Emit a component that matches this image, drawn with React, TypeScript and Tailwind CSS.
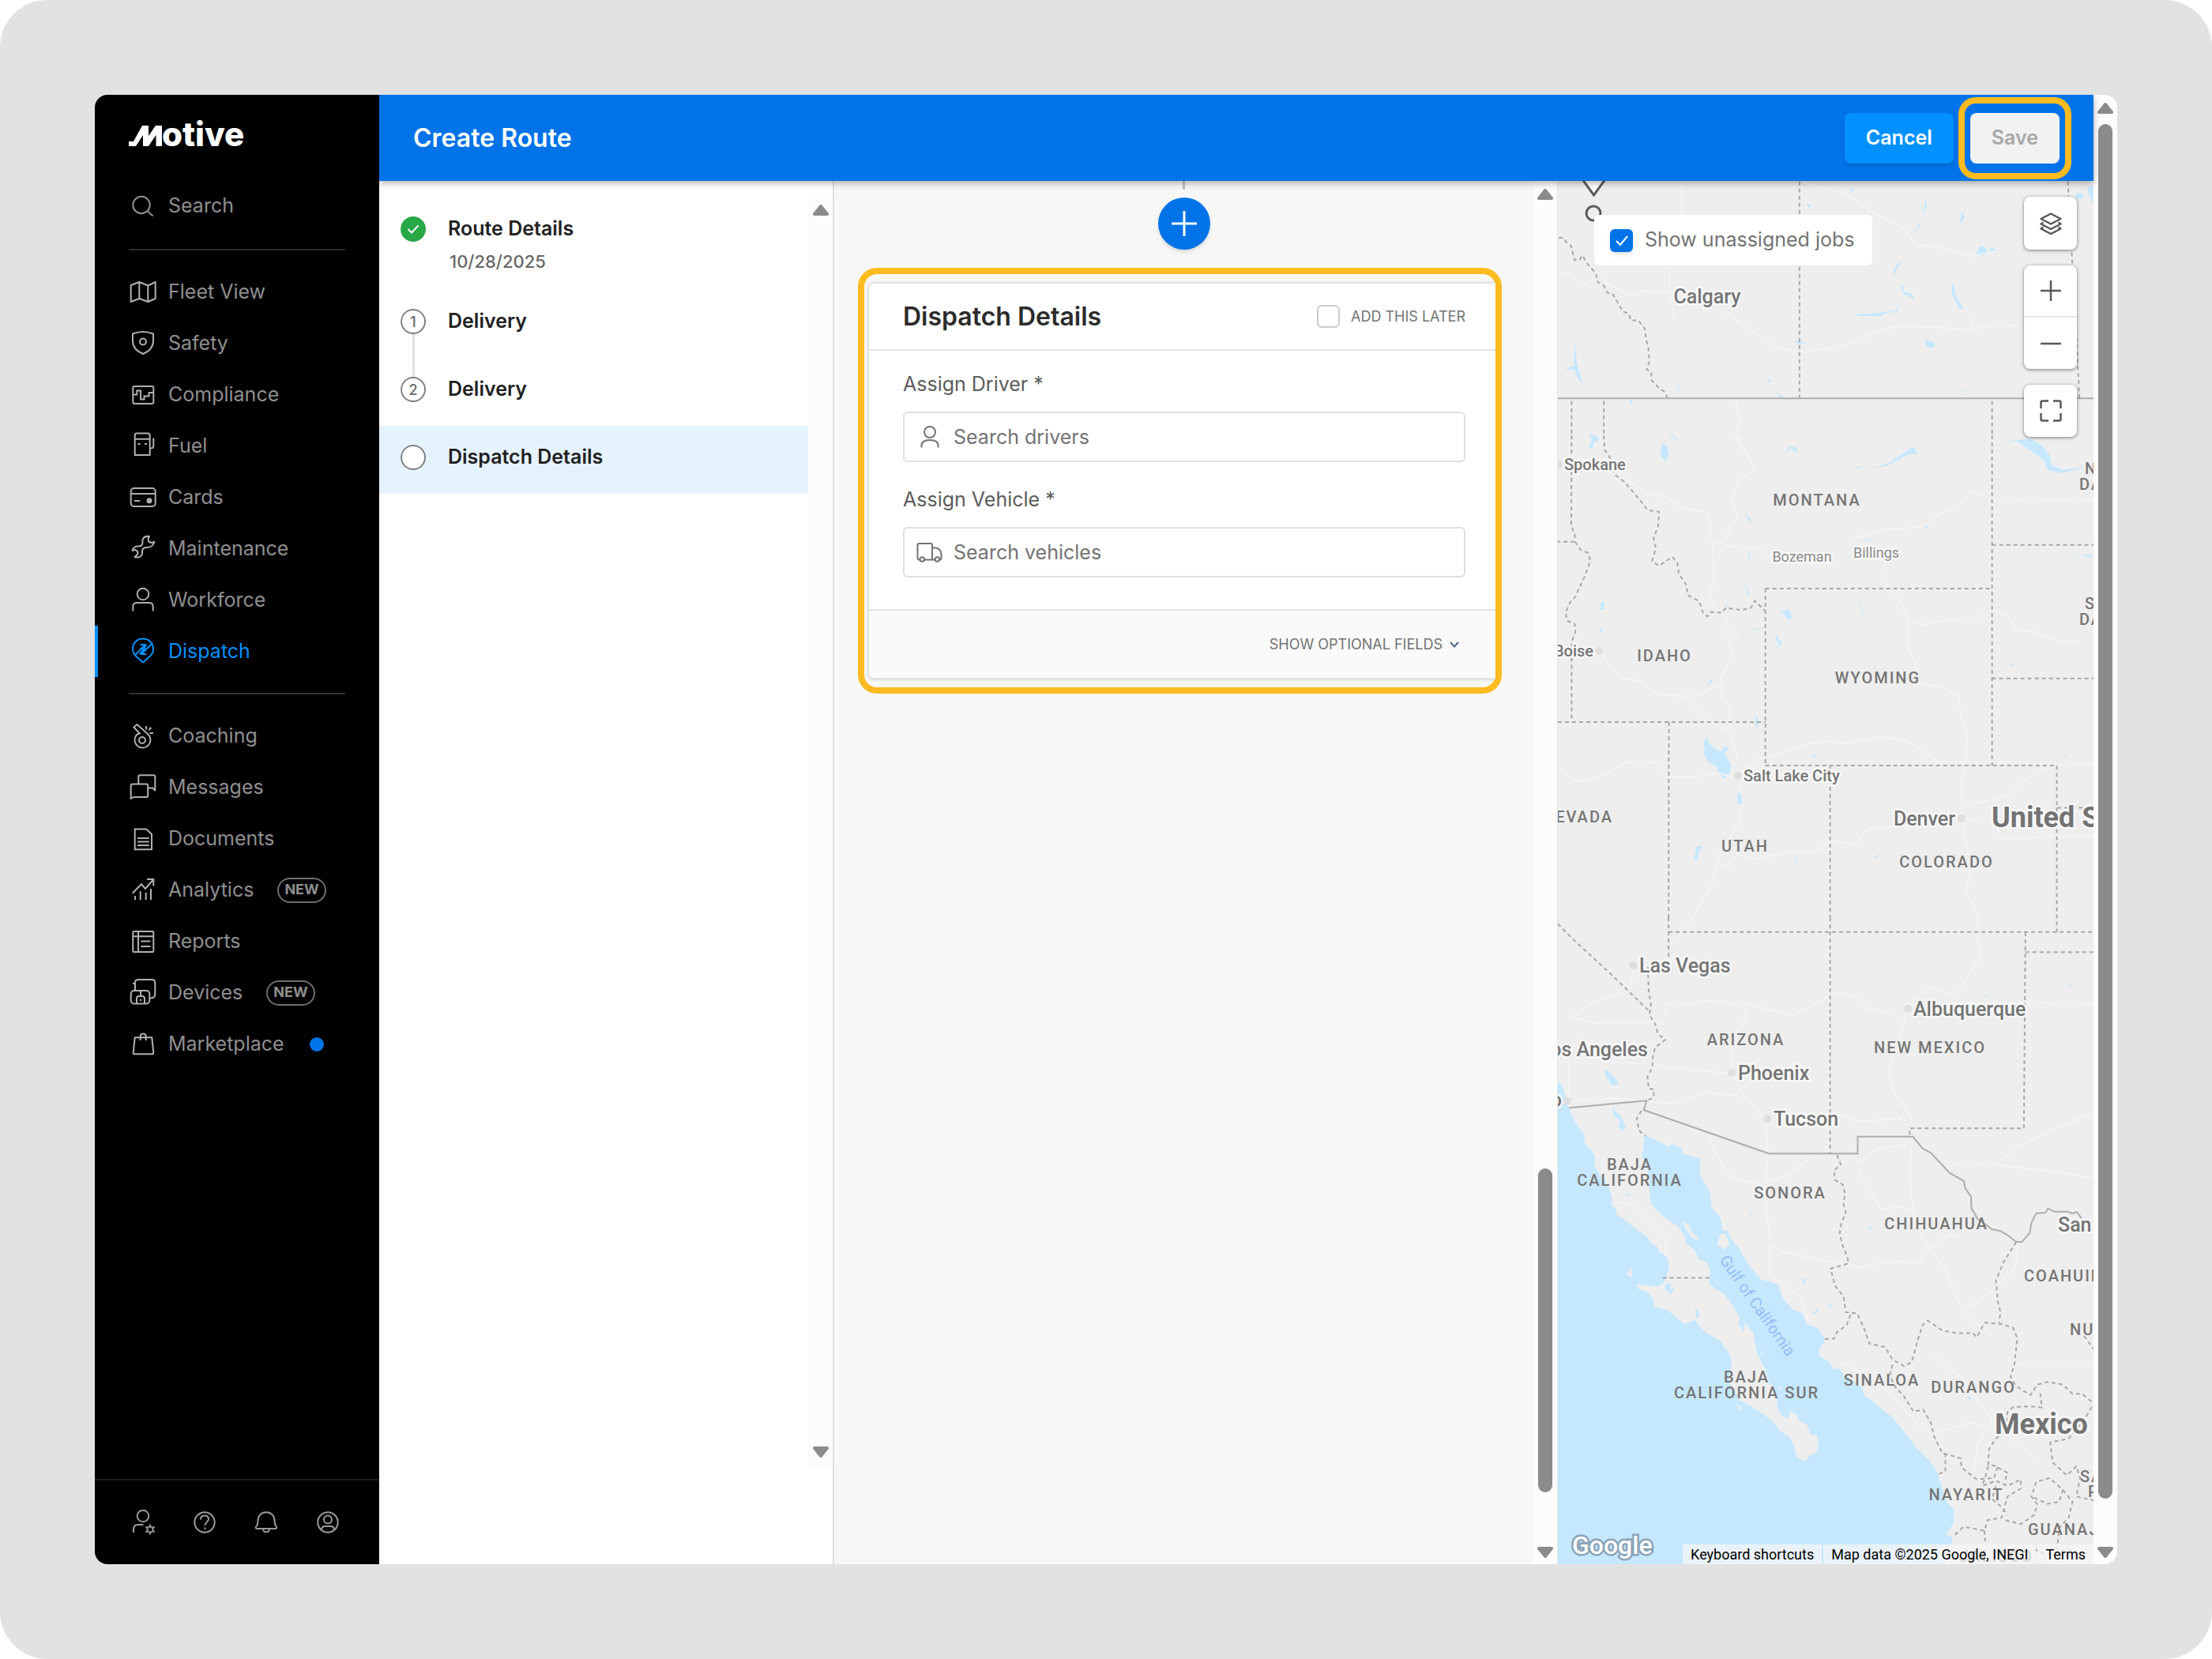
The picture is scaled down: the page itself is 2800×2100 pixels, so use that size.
import type { ReactNode } from "react";
import clsx from "clsx";

type NavEntry = {
  label: string;
  icon: ReactNode;
  badge?: boolean;
  dot?: boolean;
  active?: boolean;
};

const Icon = ({ children }: { children: ReactNode }) => (
  <svg
    viewBox="0 0 36 36"
    className="size-9 shrink-0"
    fill="none"
    stroke="currentColor"
    strokeWidth="2"
    aria-hidden="true"
  >
    {children}
  </svg>
);

const searchIcon = (
  <Icon>
    <circle cx="16" cy="16.5" r="10.7" />
    <path d="M23.5 24l7 6.5" />
  </Icon>
);

const mainNav: NavEntry[] = [
  {
    label: "Fleet View",
    icon: (
      <Icon>
        <path
          strokeLinejoin="round"
          d="M2.7 9l10.6-4 11 4.500 9.400-4.500v21l-9.400 4-11-4-10.600 4zM13.300 5v21M24.300 9.500V30"
        />
      </Icon>
    ),
  },
  {
    label: "Safety",
    icon: (
      <Icon>
        <path
          strokeLinejoin="round"
          d="M18 3c4.500 0 9 1 13 2.500v9c0 9-6 13.500-13 16.500C11 28 5 23.500 5 14.500v-9C9 4 13.500 3 18 3z"
        />
        <circle cx="18" cy="15.5" r="4" />
      </Icon>
    ),
  },
  {
    label: "Compliance",
    icon: (
      <Icon>
        <rect x="5.3" y="7" width="26" height="22" rx="2" />
        <path d="M6 17.500h4.300v-5h4.700v11h4.500v-4h6v-4.500h5.500" />
      </Icon>
    ),
  },
  {
    label: "Fuel",
    icon: (
      <Icon>
        <path d="M7.700 29V4q0-2.500 2.500-2.500h14q2.500 0 2.500 2.500v25zM7.700 8.800h19M31.300 7.500V18q0 2.500-4.600 2.500" />
        <path d="M11.500 15h3M20 15h3" />
      </Icon>
    ),
  },
  {
    label: "Cards",
    icon: (
      <Icon>
        <rect x="2.7" y="6" width="31" height="23" rx="4" />
        <path d="M3 13.100h31M7 22h7" />
        <circle cx="26" cy="21.800" r="2.500" fill="currentColor" />
      </Icon>
    ),
  },
  {
    label: "Maintenance",
    icon: (
      <Icon>
        <path
          strokeLinejoin="round"
          d="M26 2c-4-.5-7.500 1-8.500 4.500-.5 2 .5 3.500-.5 5.500-.8 1.500-2 2.500-4 2.500-4-.5-7.500 1.500-8.500 5.500l4-1 3 2.500-.5 3.500-3.500 3c4 1.500 8.500 0 9.500-4 .5-2-.5-3.500.5-5.500.8-1.500 2.500-2.500 4.500-2.500 4 .5 8.500-1.500 10.500-7l-4 1-3.500-1.500-.5-3.500z"
        />
      </Icon>
    ),
  },
  {
    label: "Workforce",
    icon: (
      <Icon>
        <circle cx="18" cy="10" r="7.300" />
        <path d="M5.300 31.500V26q0-5 5-5h15.400q5 0 5 5v5.500" />
      </Icon>
    ),
  },
  {
    label: "Dispatch",
    active: true,
    icon: (
      <Icon>
        <path
          strokeLinejoin="round"
          d="M18 31.500l-9-8C6.500 21 5 18 5 14.500 5 7 10.500 1.500 18 1.500S31 7 31 14.500c0 3.500-1.500 6.500-4 9z"
        />
        <path d="M8 22.500L20.500 9h-6M14 14.500h5.500l-5.500 6.500M28.500 8.500L16 21h6.500M22 9l-3 5.500" />
      </Icon>
    ),
  },
];

const moreNav: NavEntry[] = [
  {
    label: "Coaching",
    icon: (
      <Icon>
        <path d="M13.700 14.300L6.300 6.500 10.500 3l14 12.500a10 10 0 1 1-15.300 1.500q2-2 4.500-2.700z" />
        <circle cx="17" cy="23" r="4" />
        <path d="M22 5v4.500M28.300 7l-3 3.200M26.500 14H31" />
      </Icon>
    ),
  },
  {
    label: "Messages",
    icon: (
      <Icon>
        <path
          strokeLinejoin="round"
          d="M2.700 32V15.500q0-2 2-2h17.500q2 0 2 2v12.500q0 2-2 2H6zM12.300 13.500V4.200q0-2 2-2h17q2 0 2 2V21.500l-3-3h-6"
        />
      </Icon>
    ),
  },
  {
    label: "Documents",
    icon: (
      <Icon>
        <path d="M7.700 5.500H22l7 6.500v19.300H7.700zM11 17h14.700M11 21.500h14.700M11 26h14.700" />
      </Icon>
    ),
  },
  {
    label: "Analytics",
    badge: true,
    icon: (
      <Icon>
        <path d="M4.700 21.700L16 10.300l5 5.700L31 4.500M23 4h8.300v8.500M8 30v-5M14.700 30V19.300M21.700 30v-9M28 30V16" />
      </Icon>
    ),
  },
  {
    label: "Reports",
    icon: (
      <Icon>
        <rect x="5.3" y="5" width="26" height="26" rx="1" />
        <path d="M12 5v26M5.300 11.300h26M15.300 17.500h12M15.300 24h12" />
      </Icon>
    ),
  },
  {
    label: "Devices",
    badge: true,
    icon: (
      <Icon>
        <path d="M8 15V5q0-4 4-4h17.300q4 0 4 4v15q0 4.500-7 4.500M5 6h3" />
        <rect x="2.700" y="15" width="23.600" height="16.500" rx="4" />
        <path d="M10 31.500V25q0-3 3-3h4q3 0 3 3v6.500M15 15v7M15 25.500v2.500" />
      </Icon>
    ),
  },
  {
    label: "Marketplace",
    dot: true,
    icon: (
      <Icon>
        <path
          strokeLinejoin="round"
          d="M7.700 9.300h21.600l2 19.500q0 1.500-1.500 1.500H7q-1.500 0-1.300-1.500zM14.700 13V8q0-3.500 3.500-3.500T21.700 8v5"
        />
      </Icon>
    ),
  },
];

const footerNav = [
  {
    label: "Admin",
    icon: (
      <Icon>
        <circle cx="18" cy="10" r="7.300" />
        <path d="M6 31v-4.500q0-5.500 5.500-5.500h7" />
        <circle cx="27" cy="27" r="3.600" />
        <path d="M27 20.500v3M27 30.500v3M21.400 23.700l2.600 1.600M30 28.700l2.600 1.600M21.400 30.300l2.600-1.600M30 25.300l2.600-1.600" />
      </Icon>
    ),
  },
  {
    label: "Help",
    icon: (
      <Icon>
        <circle cx="18" cy="18" r="12.700" />
        <path d="M13 14.500c0-3 2-5 5-5s5 1.700 5 4.500c0 3.500-4.500 3.500-4.500 8M18.500 24.500v2.500" />
      </Icon>
    ),
  },
  {
    label: "Notifications",
    icon: (
      <Icon>
        <path
          strokeLinejoin="round"
          d="M18 5.300c-6.500 0-10.500 4.500-10.500 10.700 0 4-.7 5.500-2.300 7.500-1 1.300-.5 2.500 1 2.500h23.600c1.500 0 2-1.200 1-2.500-1.600-2-2.300-3.500-2.300-7.500C28.500 9.800 24.500 5.300 18 5.300zM14 26c0 2.500 1.500 4.300 4 4.300s4-1.800 4-4.300"
        />
      </Icon>
    ),
  },
  {
    label: "Account",
    icon: (
      <Icon>
        <circle cx="18" cy="18" r="12.700" />
        <circle cx="18" cy="14.500" r="5" />
        <path d="M10 27.500q0-4.500 4.500-4.500h7q4.500 0 4.500 4.500" />
      </Icon>
    ),
  },
];

const NavItem = ({ item }: { item: NavEntry }) => (
  <a
    href="#"
    className={clsx(
      "flex h-[65px] items-center border-l-4 pl-[39px] text-[25px]",
      item.active
        ? "border-[#0091ff] text-[#0091ff]"
        : "border-transparent text-[#8f8f8f]"
    )}
  >
    <span className={clsx("mr-3.5", !item.active && "text-[#b0b0b0]")}>
      {item.icon}
    </span>
    {item.label}
    {item.badge && (
      <span className="ml-[30px] flex h-8 items-center rounded-full border-2 border-[#6e6e6e] px-[7px] pb-0.5 text-[18px] leading-5 font-bold">
        NEW
      </span>
    )}
    {item.dot && (
      <span className="ml-8 size-[18px] rounded-full bg-[#0073e8]" />
    )}
  </a>
);

const Sidebar = () => (
  <nav className="flex w-[360px] shrink-0 flex-col bg-black">
    <a
      href="#"
      aria-label="Motive"
      className="mt-6 flex h-[52px] items-baseline pl-[43px] text-[42px] leading-[52px] font-extrabold text-white"
    >
      <svg viewBox="0 0 42 26" className="h-[26px] w-[42px]" fill="currentColor">
        <path d="M0 26v-6h6L17 0h8v13L34 0h8v26h-7.500V12L25 26h-7V12L9 26z" />
      </svg>
      otive
    </a>
    <a
      href="#"
      className="mt-[33px] flex h-16 items-center pl-[43px] text-[25px] text-[#8f8f8f]"
    >
      <span className="mr-3.5">{searchIcon}</span>
      Search
    </a>
    <div className="mx-[43px] mt-[22px] mb-5 h-[2px] bg-[#2b2b2b]" />
    {mainNav.map((item) => (
      <NavItem key={item.label} item={item} />
    ))}
    <div className="mx-[43px] mt-5 mb-5 h-[2px] bg-[#333333]" />
    {moreNav.map((item) => (
      <NavItem key={item.label} item={item} />
    ))}
    <div className="mt-auto flex h-[108px] items-center gap-[42px] border-t-2 border-[#1f1f1f] pl-[43px] text-[#9a9a9a]">
      {footerNav.map((item) => (
        <button key={item.label} type="button" aria-label={item.label}>
          {item.icon}
        </button>
      ))}
    </div>
  </nav>
);

const Arrow = ({ down }: { down?: boolean }) => (
  <svg
    viewBox="0 0 20 14"
    className={clsx("h-[14px] w-5 shrink-0", down && "rotate-180")}
    fill="#8b8b8b"
    stroke="#8b8b8b"
    strokeWidth="4"
    strokeLinejoin="round"
  >
    <path d="M10 2l8 10H2z" />
  </svg>
);

const Header = () => (
  <header className="relative z-10 flex h-[109px] items-center bg-[#0073e8] pr-7 pl-[43px] shadow-[0_3px_8px_rgba(0,0,0,0.3)]">
    <h1 className="text-[32px] font-semibold text-white">Create Route</h1>
    <button
      type="button"
      className="mr-1.5 ml-auto h-16 rounded-lg bg-[#0091ff] px-[27px] text-[25px] font-semibold text-white shadow-md"
    >
      Cancel
    </button>
    <div className="rounded-[22px] border-8 border-[#ffbb1f] px-[7px] py-3">
      <button
        type="button"
        className="h-16 rounded-lg bg-[#f2f2f2] px-[27px] text-[25px] font-semibold text-[#a8a8a8]"
      >
        Save
      </button>
    </div>
  </header>
);

const StepMark = ({ children }: { children?: ReactNode }) => (
  <span className="flex size-8 items-center justify-center rounded-full border-2 border-[#808080] bg-white text-[18px] font-medium text-[#666666]">
    {children}
  </span>
);

const Steps = () => (
  <aside className="flex w-[576px] shrink-0 border-r-2 border-[#e0e0e0] bg-white">
    <ol className="flex-1 text-[25px] font-semibold text-[#212121]">
      <li className="flex h-[138px] gap-7 pt-[45px] pl-[27px]">
        <svg viewBox="0 0 32 32" className="size-8">
          <circle cx="16" cy="16" r="16" fill="#28a745" />
          <path
            d="M9.500 16l4.500 4.500 8.500-9"
            fill="none"
            stroke="#fff"
            strokeWidth="2"
          />
        </svg>
        <div>
          <div className="leading-[30px]">Route Details</div>
          <div className="mt-3 pl-0.5 text-[22px] leading-[30px] font-medium text-[#666666]">
            10/28/2025
          </div>
        </div>
      </li>
      <li className="relative flex h-[86px] items-center gap-7 pb-1.5 pl-[27px]">
        <StepMark>1</StepMark>
        Delivery
        <span className="absolute top-14 left-[42px] h-[54px] w-[3px] bg-[#e0e0e0]" />
      </li>
      <li className="flex h-[86px] items-center gap-7 pb-1.5 pl-[27px]">
        <StepMark>2</StepMark>
        Delivery
      </li>
      <li className="flex h-[86px] items-center gap-7 bg-[#e5f3ff] pb-1.5 pl-[27px]">
        <StepMark />
        Dispatch Details
      </li>
    </ol>
    <div className="mt-[22px] mb-[123px] flex w-[31px] flex-col items-center justify-between bg-[#fcfcfc] pt-2 pb-3">
      <Arrow />
      <Arrow down />
    </div>
  </aside>
);

const SearchField = ({
  id,
  label,
  placeholder,
  icon,
}: {
  id: string;
  label: string;
  placeholder: string;
  icon: ReactNode;
}) => (
  <div>
    <label htmlFor={id} className="block leading-[30px] text-[#5c5c5c]">
      {label}
    </label>
    <div className="mt-5 flex h-16 items-center gap-3 rounded-md border-2 border-[#e0e0e0] bg-white pl-[14px] text-[#737373]">
      {icon}
      <input
        id={id}
        type="text"
        placeholder={placeholder}
        className="h-full flex-1 bg-transparent outline-none placeholder:text-[#737373]"
      />
    </div>
  </div>
);

const driverIcon = (
  <Icon>
    <circle cx="18" cy="12" r="7" />
    <path d="M7.500 31.500v-2.500c0-5 4-7 10.500-7s10.500 2 10.500 7v2.500" />
  </Icon>
);

const vehicleIcon = (
  <Icon>
    <path
      strokeLinejoin="round"
      d="M5.500 27.500H4.500q-2 0-2-2V9q0-2 2-2h14.500q2 0 2 2v18.500H11M21 12.500h5q6 1.500 6.500 8v5q0 2-1.500 2M21 27.500h3"
    />
    <circle cx="8.300" cy="27" r="2.800" />
    <circle cx="27.500" cy="27" r="2.800" />
  </Icon>
);

const DispatchCard = () => (
  <section className="mt-[23px] mr-10 ml-[30px] rounded-[24px] border-8 border-[#ffbb1f] py-2.5 pl-1">
    <div className="overflow-hidden rounded-l-lg border-2 border-r-0 border-[#e3e3e3] bg-white text-[25px] shadow-sm">
      <div className="flex h-[85px] items-center border-b-2 border-[#e3e3e3] pr-[38px] pl-[43px]">
        <h2 className="text-[32px] font-semibold text-[#2b2b2b]">
          Dispatch Details
        </h2>
        <label className="ml-auto flex items-center gap-3.5 text-[18px] text-[#737373]">
          <input
            type="checkbox"
            className="size-[29px] appearance-none rounded-md border-2 border-[#cccccc] bg-white"
          />
          ADD THIS LATER
        </label>
      </div>
      <div className="flex flex-col gap-8 pt-[27px] pr-[38px] pb-10 pl-[43px]">
        <SearchField
          id="driver"
          label="Assign Driver *"
          placeholder="Search drivers"
          icon={driverIcon}
        />
        <SearchField
          id="vehicle"
          label="Assign Vehicle *"
          placeholder="Search vehicles"
          icon={vehicleIcon}
        />
      </div>
      <div className="flex h-[87px] items-center justify-end border-t-2 border-[#e3e3e3] bg-[#fafafa] pr-[45px]">
        <button
          type="button"
          className="flex items-center gap-2 text-[18px] text-[#737373]"
        >
          SHOW OPTIONAL FIELDS
          <svg
            viewBox="0 0 14 10"
            className="h-2.5 w-3.5"
            fill="none"
            stroke="#4a6580"
            strokeWidth="2"
          >
            <path d="M2 2l5 5.500L12 2" />
          </svg>
        </button>
      </div>
    </div>
  </section>
);

const Editor = () => (
  <main className="flex min-w-0 flex-1 border-r border-[#e6e6e6] bg-[#f7f7f7]">
    <div className="flex-1">
      <div className="flex flex-col items-center">
        <div className="h-[11px] w-[3px] bg-[#bfbfbf]" />
        <button
          type="button"
          aria-label="Add stop"
          className="mt-2.5 flex size-[66px] items-center justify-center rounded-full bg-[#0073e8] text-white shadow-md"
        >
          <svg
            viewBox="0 0 34 34"
            className="size-[34px]"
            stroke="currentColor"
            strokeWidth="3"
          >
            <path d="M17 1v32M1 17h32" />
          </svg>
        </button>
      </div>
      <DispatchCard />
    </div>
    <div className="flex w-[30px] flex-col items-center bg-[#fcfcfc] pt-[10px] pb-2">
      <Arrow />
      <div className="mt-auto mb-[69px] h-[410px] w-[18px] rounded-full bg-[#8b8b8b]" />
      <Arrow down />
    </div>
  </main>
);

// Each band of the map is drawn in its own units, then scaled into place.
const north = "translate(-32 -118) scale(.4847 .3333)";
const middle = "translate(-32 322) scale(.4847 .4082)";
const south = "translate(-32 932) scale(.4847 .3333)";

const coast =
  "M66 620L80 650 88 690 95 725 110 775 120 800 137 828 135 860 150 880 163 905 162 945 180 985 200 1030 207 1060 207 1098 217 1105 218 1128 240 1150 262 1175 275 1190 300 1215 310 1240 325 1250 330 1270 350 1290 355 1310 355 1345 345 1370 348 1378 330 1403 300 1400 272 1393 275 1410 300 1425 315 1450 318 1480 350 1490 375 1520 395 1545 425 1530 430 1545 455 1580 490 1610 505 1640 518 1670 520 1705 515 1740 518 1780 535 1815 540 1835 575 1860 605 1890 630 1920 645 1950 672 1975 683 2010 690 2050 703 2063 712 2063 725 2045 742 2030 746 1995 742 1970 725 1965 718 1930 695 1910 690 1890 672 1875 668 1905 650 1895 640 1865 637 1830 632 1785 617 1770 610 1720 597 1690 585 1650 580 1610 575 1575 555 1540 552 1570 538 1550 540 1520 530 1490 515 1460 500 1430 480 1415 460 1390 465 1350 455 1310 435 1300 425 1270 405 1240 400 1245 398 1210 380 1175 350 1145 330 1120 310 1090 305 1050 305 1000 300 960 285 905 290 870 292 828 310 838 340 860 355 873 362 858 390 878 393 900 438 915 436 970 445 1000 455 1020 465 1055 467 1100 490 1140 497 1190 510 1190 515 1215 540 1260 550 1290 560 1310 575 1340 595 1375 620 1385 643 1395 648 1430 660 1460 680 1490 705 1505 715 1545 745 1560 762 1600 762 1615 748 1640 748 1665 775 1690 785 1715 800 1715 815 1740 860 1785 865 1815 885 1835 905 1860 940 1900 965 1945 1000 2010 1030 2055 1055 2100 1068 2165 1085 2225 1100 2250 1100 2300 1080 2345 1097 2355 1095 2380 1065 2385 1065 2400 1080 2460 60 2460 60 620z";

type LabelKind = "state" | "city" | "town" | "small" | "country";

type MapLabel = {
  x: number;
  y: number;
  text: string;
  kind: LabelKind;
  anchor?: "start" | "middle" | "end";
};

const labelStyles: Record<LabelKind, string> = {
  state: "fill-[#757575] text-[20px] font-medium tracking-[2px]",
  city: "fill-[#757575] text-[25px] font-medium",
  town: "fill-[#757575] text-[20px] font-medium",
  small: "fill-[#8a8a8a] text-[18px]",
  country: "fill-[#737373] text-[36px] font-bold",
};

const mapLabels: MapLabel[] = [
  { x: 189, y: 155, text: "Calgary", kind: "city", anchor: "middle" },
  { x: 8, y: 366, text: "Spokane", kind: "town" },
  { x: 328, y: 411, text: "MONTANA", kind: "state", anchor: "middle" },
  { x: 309, y: 482, text: "Bozeman", kind: "small", anchor: "middle" },
  { x: 403, y: 477, text: "Billings", kind: "small", anchor: "middle" },
  { x: 667, y: 371, text: "NORTH", kind: "state" },
  { x: 660, y: 391, text: "DAKOTA", kind: "state" },
  { x: 667, y: 542, text: "SOUTH", kind: "state" },
  { x: 660, y: 562, text: "DAKOTA", kind: "state" },
  { x: 45, y: 602, text: "Boise", kind: "town", anchor: "end" },
  { x: 135, y: 608, text: "IDAHO", kind: "state", anchor: "middle" },
  { x: 405, y: 636, text: "WYOMING", kind: "state", anchor: "middle" },
  { x: 235, y: 760, text: "Salt Lake City", kind: "town" },
  { x: 70, y: 812, text: "NEVADA", kind: "state", anchor: "end" },
  { x: 237, y: 849, text: "UTAH", kind: "state", anchor: "middle" },
  { x: 503, y: 816, text: "Denver", kind: "city", anchor: "end" },
  { x: 549, y: 818, text: "United States", kind: "country" },
  { x: 492, y: 869, text: "COLORADO", kind: "state", anchor: "middle" },
  { x: 103, y: 1002, text: "Las Vegas", kind: "city" },
  { x: 450, y: 1057, text: "Albuquerque", kind: "city" },
  { x: 238, y: 1094, text: "ARIZONA", kind: "state", anchor: "middle" },
  { x: 471, y: 1104, text: "NEW MEXICO", kind: "state", anchor: "middle" },
  { x: 114, y: 1108, text: "Los Angeles", kind: "city", anchor: "end" },
  { x: 228, y: 1138, text: "Phoenix", kind: "city" },
  { x: 5, y: 1172, text: "San Diego", kind: "city", anchor: "end" },
  { x: 273, y: 1196, text: "Tucson", kind: "city" },
  { x: 91, y: 1252, text: "BAJA", kind: "state", anchor: "middle" },
  { x: 91, y: 1272, text: "CALIFORNIA", kind: "state", anchor: "middle" },
  { x: 294, y: 1288, text: "SONORA", kind: "state", anchor: "middle" },
  { x: 479, y: 1327, text: "CHIHUAHUA", kind: "state", anchor: "middle" },
  { x: 633, y: 1330, text: "San Antonio", kind: "city" },
  { x: 590, y: 1393, text: "COAHUILA", kind: "state" },
  { x: 648, y: 1461, text: "NUEVO", kind: "state" },
  { x: 239, y: 1521, text: "BAJA", kind: "state", anchor: "middle" },
  { x: 239, y: 1541, text: "CALIFORNIA SUR", kind: "state", anchor: "middle" },
  { x: 410, y: 1525, text: "SINALOA", kind: "state", anchor: "middle" },
  { x: 526, y: 1534, text: "DURANGO", kind: "state", anchor: "middle" },
  { x: 612, y: 1586, text: "Mexico", kind: "country", anchor: "middle" },
  { x: 661, y: 1647, text: "SAN LUIS", kind: "state" },
  { x: 517, y: 1670, text: "NAYARIT", kind: "state", anchor: "middle" },
  { x: 671, y: 1666, text: "POTOSI", kind: "state" },
  { x: 595, y: 1714, text: "GUANAJUATO", kind: "state" },
  { x: 555, y: 1748, text: "JALISCO", kind: "state", anchor: "middle" },
];

const cityDots = [
  [2, 359],
  [52, 595],
  [228, 753],
  [511, 807],
  [95, 993],
  [443, 1048],
  [220, 1129],
  [265, 1187],
  [12, 1165],
];

const MapDrawing = () => (
  <svg
    viewBox="0 0 678 1752"
    preserveAspectRatio="xMinYMin slice"
    className="absolute inset-0 size-full bg-[#eeeeee] font-[Roboto,sans-serif] [&_path]:[vector-effect:non-scaling-stroke]"
  >
    <g fill="#c5e8ff">
      <path transform={south} d={coast} />
      <path
        transform={south}
        d="M188 578L205 595 222 625 222 637 207 640 190 600zM208 725L230 755 243 795 232 810 225 795 228 770 212 755zM235 1057l24-8-6 7zM567 1118l4 2-2 20zM878 1170l6 5-4 18zM956 728l10 24-8-12zM1180 300l8-5-5 10zM1400 260l8-8-8 18zM768 1460l20 26-12-6zM704 1380l12-10-6 26zM727 1510l22-28-8 20zM965 1290l6 2-2 6zM345 1400l15-15 0 30 10-10-8 28-16-20zM424 1485l14 22-10 20zM1130 1020l8 30-4-8zM968 1830l6 0 2 14zM1135 1815l12 15-8 5zM1025 2050l15 12 15-12-20 18zM862 1660l12 8z"
      />
      <path
        transform={middle}
        d="M455 935L460 955 485 980 498 975 495 965 515 970 500 985 518 1020 515 1050 498 1065 485 1045 478 1025 460 1015 448 990 447 950zM536 1108l15 12-2 20-14 5zM428 1275l16-3-10 20-4 28-8-3zM650 545l12 0 6-8 10 30-10 6zM636 615l8 22 10 4-20 26 10-22-10-10zM338 25l12 8 6 30-10 18-12-20zM152 0l12 0 10 15-14 8-8 20-6-3 12-22zM178 517h9v22l-9 3zM180 590l2 15-6 10zM465 755l5 8-14 18zM585 865l5 22-4 20-5-10zM853 510l15 60-10-30zM555 460l12 38-6-4zM556 245l12 10 2 20zM567 355v28l-4 0zM860 328l40-13-30 14zM1020 285l15-6-8 9zM870 125l12-20 50-20 50-40 20 5 15 55-12-45-20-3-60 38-45 8zM842 98l20 0-10 5zM1200 35l60-20 40-3 30 20 20 30 5 30 30 15 60-10-60 20-40-10-10-30-30-25-40-35-40 8zM625 72l30-18 20-20 15 6 2 15-15-14zM760 70l12-4zM540 635l20-20-10 6zM575 600l30 0-20 4zM730 990l7 0-3 15zM765 1158l30-14-20 10zM893 1308l18-12-12 14zM640 1478l14-22-10 14zM682 1292l10 40-8-20zM612 1372l14-4zM1245 710l10 0-5 6zM1380 987l16 5-6 3zM1170 1383l14 4zM498 524l14 0-6 6zM758 545l8 3zM984 533l14 3zM195 205l14 4zM825 832l14-8zM955 825l4 12zM1395 375l60-6 10 10-30-6z"
      />
      <path
        transform={north}
        d="M1168 600l15 5 3 25-12 12-16-5zM1190 615l8-8 12 12-8 8zM1022 962l18-3 12 15-6 14-14-2zM1420 398l20 6-6 20-16-4zM1448 380l16-10v70l-10-30zM715 440l14 5-8 12zM828 375l10 18-8 0zM1122 470l6 20-8 25-4-15zM1098 735l-4 45 18 55 14 8-20-50zM960 745l10 15-2 14 22 10 8 18-28-18-16 50-18 40 18-30 6-36 10-22zM826 835l18 26 62-5 40-14-38 26-58-2zM110 960l6 90 16 75-8-10-16-45-24 0 24-15zM218 402l16 12-4 0zM350 388l12 8zM932 460l8 0-2 6zM1026 425l4 20-10 40zM1015 510l-32 55 28-40zM968 655l-18 35-8 30 4-40zM684 966l10-5 26 12-22-2zM768 975l10-2-5 6zM612 1108l10 3-2 12zM625 1145l45 45-20-10zM1080 1100l14 8zM385 1120l-10 35 2-20zM247 1120l10 25zM190 825l6 22zM487 855l8 28zM528 905l4-5 0 16zM212 948l-4 20zM110 900l0 25zM230 748l16-3zM736 800l20-3zM687 858l-16 12zM1125 1155l8-6 0 8zM252 1192l8-8-2 22zM118 1245l-2 30zM148 1310l18 20-10 40-10 0 8-30zM355 1305l30 40-18-15zM340 1352l12 8 2 20-12 0zM980 1372l15-6 10 14zM575 1301h24z"
      />
    </g>
    <g fill="#eeeeee">
      <path
        transform={south}
        d="M395 1157L410 1170 415 1195 430 1215 433 1230 415 1215 397 1180zM490 1200L505 1205 515 1240 500 1262 483 1245zM258 1328L260 1370 246 1357zM528 1845l20 20-4 8zM704 1880l8 16-4-2zM598 1640l2 20-4 4zM640 1775l10 20-8-4zM984 2225l6 12z"
      />
    </g>
    <g fill="none" stroke="#f3f3f3" strokeWidth="2">
      <path
        transform={north}
        d="M68 700l30 10 40 40 30-45 30 40 60 45 35-20 50 10 20-10M390 356v130M700 356l120 50 60 60 90 70 30 60 80 15 70 30 60-20M357 680v100l15 100M490 840l60 60 90 90 60 12 110-18 100-65 60-15 180 15 70-25 50 15M530 1190l10 60-10 70 20 60M1140 870l10 50"
      />
      <path
        transform={middle}
        d="M205 115l60 35 30 32 40 3 60 40 60 15 10 35-5 45 20 12 70 20 35-3 50 35M535 0l25 60 20 50-40 30-20 60 15 50-20 40-30 90M470 330l5 120-15 50 20 40 30 30v60l12 60-30 60 5 70 18 20v70M920 390v80l35 30 25 70v90l20 40 8 70M985 572l30 15 60-12 80-5 45-30 40 20 25 45 50 5 70 32h50M1008 770l60 10 45 30 5 60 18 50-5 120-10 30v120l10 80 20 70-20 70 30 70v60M830 320l100-30 90-5 40-40 60-30 25-45 55 28 265 5M170 668l60 85 50 8 50 45 100 3 45-30 30-15M400 810l50 70 70 40 15 90M66 1030l50 45 70-20 60-42 70 0 40 45h70l60-10 60 20 10-30 35-35 60-20 60-25 60-10 40 8 100-20 60 8 95 70h220l40 10 170-8M540 1060l10 80-15 70-50 90-15 90-60 120-45 60M485 1320l20 20 30-40 40 15 110-25 50 5 45-40 60 15 35-50 110-10M1125 1190l80 5 20 55 240-10M1125 1150l110-30 80-75 60-20"
      />
      <path
        transform={south}
        d="M100 377l60 25 120-5 60 3 12-70 60 5 35-20 60 10 50 3 120 45 90-65 40-25 40 20 30 50 70 5M105 377l60-60 90-45 10-80M555 330l5 50-40 80v130l35 95 55 85 5 140-10 120 15 200M1160 60l10 80-30 80-40 75-60-30-60 60-20 140-30 120 10 70 55 120M965 330l280-8 220 8M190 550l100 5 50 12 130 20 50 5M95 540v160l120-12 150 20 90-42 90 14M800 750l50 25 115-10M1465 745l-90 50-100 70-70 75 150 25 110 25M1205 935l-90 5-55-20M990 860l-90 20-60 60M460 840l30 90 30 60 80 25 60-30 80-85M850 960l60 150 50-10 40 20M990 870l-5 130 15 180 30 60 50 100 40 150 80 100M620 1240l30 30 200 60 80-22 80 5 20-45 60-65 30 15M620 1240v120l80 80 20 100M220 1080l50 20 40 60 40 60-5 60M1040 1650l80 100 80 160-40 100-5 100M1130 1490l60-60 70-100 10-100M1270 1700h190M1050 1960l90-40 90 30 90 120M800 1690l90 60 70 100 60 100"
      />
    </g>
    <g
      fill="none"
      stroke="#a8a8a8"
      strokeWidth="2"
      strokeDasharray="5 4"
      strokeLinejoin="round"
    >
      <path
        transform={north}
        d="M68 570L80 570 90 590 100 600 110 655 122 655 130 637 145 672 165 705 170 738 185 750 195 778 210 785 222 815 235 850 250 857 258 885 275 882 293 915 297 960 302 985 305 1040 298 1070 310 1080 310 1110 330 1140 345 1155 352 1178M697 356V1178M1398 356L1400 420 1408 630 1415 800 1422 1000 1428 1178M102 1190V1320M186 1190V1320M1200 1190V1320"
      />
      <path
        transform={middle}
        d="M102 0L101 280 111 310 108 330 66 330M111 330L125 355 145 365 151 390 135 440 112 500 98 518 86 550 90 575 110 585 112 610 102 640 102 889M186 0L188 45 205 75 213 120 240 145 262 175 285 208 300 232 330 237 328 280 316 320 322 350 312 390 330 405 365 377 378 395 382 430 402 465 405 495 435 515 445 550 457 562 465 548 495 550 505 535 545 542 570 535 580 513 608 545M608 475H1200M608 475V1024M608 1024H1369V1155H1465M1200 0V1024M1200 340H1465M1200 754H1465M66 889H608M356 889L355 1495M777 1024V1495M1369 1155V1540M355 1540H1465"
      />
      <path
        transform={south}
        d="M66 25L110 90 200 210 303 355M355 0V160M301 190L303 280 309 330 305 370 320 405 328 445 347 465 320 495 314 530 313 570 300 605 303 650 318 655 315 685 298 697M777 0V898M1287 57L1283 802 985 802 985 830M1287 133H1465M284 735L272 765 278 810 295 832M795 903L805 940 787 962 790 998 810 1015 816 1050 812 1090 818 1120 806 1165 802 1200 808 1240 822 1290 825 1315 778 1335 790 1400 812 1440 818 1500 848 1505 865 1560 880 1620 920 1632 940 1680 970 1705 990 1690 1005 1610 1018 1550 1032 1532 1070 1570 1110 1580 1150 1580 1160 1595 1180 1540 1225 1545 1255 1560 1266 1600 1258 1700 1248 1745 1262 1780 1300 1815 1318 1775 1345 1765 1385 1775 1410 1810 1435 1810 1460 1840M1263 1233L1230 1310 1210 1380 1215 1460 1222 1500 1218 1540M830 1510L820 1550 795 1575 788 1600 762 1602M940 1700L933 1740 945 1780 970 1820 995 1878 1020 1870 1040 1920 1048 1970 1070 2035 1118 2055 1120 2090 1160 2135 1205 2130 1215 2085 1190 2080 1192 2020 1210 1980 1235 1950 1240 1880 1255 1860 1300 1858 1330 1862 1325 1800M1078 2035L1078 2105 1060 2115M1190 2085L1175 2160 1210 2140 1240 2160 1275 2135 1275 2170 1240 2200 1225 2280 1188 2290 1180 2330 1125 2315 1100 2350M1215 2090L1240 2110 1232 2150M1210 2160L1200 2210 1225 2240 1240 2270M1235 2290L1275 2305 1310 2270 1318 2230 1303 2200 1315 2145 1350 2130 1385 2175 1375 2220 1345 2228 1310 2205M1460 1860L1440 1910 1400 1980 1352 1995 1358 2070 1395 2120 1420 2085 1430 2130 1420 2200 1465 2215M340 1370H465M1440 1590L1465 1640M1385 2175L1410 2220 1400 2280 1375 2320 1370 2400M1180 2330L1182 2370M1310 2400L1340 2420 1400 2400 1440 2440"
      />
    </g>
    <g fill="none" stroke="#adadad" strokeWidth="2" strokeLinejoin="round">
      <path transform={north} d="M60 1180H1480" />
      <path
        transform={south}
        d="M95 724L298 697 290 732 617 898 849 898 849 833 993 833 1018 878 1040 895 1088 970 1126 1002 1130 1030 1145 1060 1146 1105 1162 1145 1200 1185 1222 1192 1240 1207 1263 1233 1278 1233 1298 1200 1303 1160 1315 1125 1340 1122 1346 1106 1362 1118 1395 1118 1410 1125 1422 1120 1434 1145"
      />
    </g>
    {cityDots.map(([cx, cy]) => (
      <circle key={cx} cx={cx} cy={cy} r="5" fill="#dedede" />
    ))}
    <text
      transform="translate(204 1366) rotate(55)"
      className="fill-[#94bdfb] text-[20px]"
    >
      Gulf of California
    </text>
    {mapLabels.map(({ x, y, text, kind, anchor }) => (
      <text
        key={text + y}
        x={x}
        y={y}
        textAnchor={anchor}
        className={labelStyles[kind]}
        stroke={kind === "state" ? "none" : "#f8f8f8"}
        strokeWidth="5"
        strokeLinejoin="round"
        paintOrder="stroke"
      >
        {text}
      </text>
    ))}
    <g fill="#fff" stroke="#5c5c5c" strokeWidth="3">
      <path d="M31 -2L45.500 18 60 -2" />
      <circle cx="45" cy="41" r="9" fill="#eeeeee" />
    </g>
  </svg>
);

const controlClass =
  "flex w-[67px] items-center justify-center rounded-lg bg-white text-[#595959] shadow-[0_1px_4px_rgba(0,0,0,0.5)]";

const ControlIcon = ({ d }: { d: string }) => (
  <svg
    viewBox="0 0 28 28"
    className="size-7"
    fill="none"
    stroke="currentColor"
    strokeWidth="2.5"
    strokeLinejoin="round"
  >
    <path d={d} />
  </svg>
);

const MapPanel = () => (
  <section className="relative w-[678px] shrink-0 overflow-hidden">
    <MapDrawing />
    <label className="absolute top-[43px] left-[46px] flex h-16 items-center gap-[15px] rounded-md bg-white pr-[23px] pl-5 text-[25px] text-[#737373]">
      <span className="relative size-[29px]">
        <input
          type="checkbox"
          defaultChecked
          className="block size-full appearance-none rounded-md bg-[#0073e8] shadow-md"
        />
        <svg
          viewBox="0 0 29 29"
          className="pointer-events-none absolute inset-0"
          fill="none"
          stroke="#fff"
          strokeWidth="2"
        >
          <path d="M8 15l5 5 9-11" />
        </svg>
      </span>
      Show unassigned jobs
    </label>
    <div className="absolute top-5 right-[21px] flex flex-col gap-5">
      <button
        type="button"
        aria-label="Layers"
        className={clsx(controlClass, "h-[67px]")}
      >
        <ControlIcon d="M14 1.500L26.500 8 14 14.500 1.500 8zM4.500 12.500l-3 2L14 21l12.500-6.500-3-2M4.500 18.500l-3 2L14 27l12.500-6.500-3-2" />
      </button>
      <div className={clsx(controlClass, "flex-col")}>
        <button
          type="button"
          aria-label="Zoom in"
          className="flex h-[66px] w-full items-center justify-center border-b-2 border-[#e6e6e6]"
        >
          <ControlIcon d="M14 1v26M1 14h26" />
        </button>
        <button
          type="button"
          aria-label="Zoom out"
          className="flex h-[65px] w-full items-center justify-center"
        >
          <ControlIcon d="M1 14h26" />
        </button>
      </div>
      <button
        type="button"
        aria-label="Full screen"
        className={clsx(controlClass, "h-[66px]")}
      >
        <ControlIcon d="M11 1.500H3.500q-2 0-2 2V11M17 1.500h7.500q2 0 2 2V11M11 26.500H3.500q-2 0-2-2V17M17 26.500h7.500q2 0 2-2V17" />
      </button>
    </div>
    <a
      href="#"
      className="absolute bottom-1 left-[18px] font-[Roboto,sans-serif] text-[32px] leading-[40px] font-medium text-white [-webkit-text-stroke:5px_#8aa4b8] [paint-order:stroke_fill]"
    >
      Google
    </a>
    <div className="absolute right-0 bottom-0 flex gap-0.5 font-[Roboto,sans-serif] text-[18px] leading-[25px] text-black *:bg-[#f5f5f5]/75 *:px-2.5">
      <button type="button">Keyboard shortcuts</button>
      <span>Map data ©2025 Google, INEGI</span>
      <a href="#">Terms</a>
    </div>
  </section>
);

export default function App() {
  return (
    <div className="bg-white font-[Inter,sans-serif]">
      <div className="flex min-h-screen rounded-[60px] bg-[#e2e2e2] p-[120px]">
        <div className="flex flex-1 overflow-hidden rounded-[16px]">
          <Sidebar />
          <div className="flex min-w-0 flex-1 flex-col">
            <Header />
            <div className="flex flex-1">
              <Steps />
              <Editor />
              <MapPanel />
            </div>
          </div>
          <div className="flex w-[30px] flex-col items-center bg-[#fcfcfc] pt-2.5 pb-2">
            <Arrow />
            <div className="mt-[13px] mb-[61px] w-[18px] flex-1 rounded-full bg-[#8b8b8b]" />
            <Arrow down />
          </div>
        </div>
      </div>
    </div>
  );
}
